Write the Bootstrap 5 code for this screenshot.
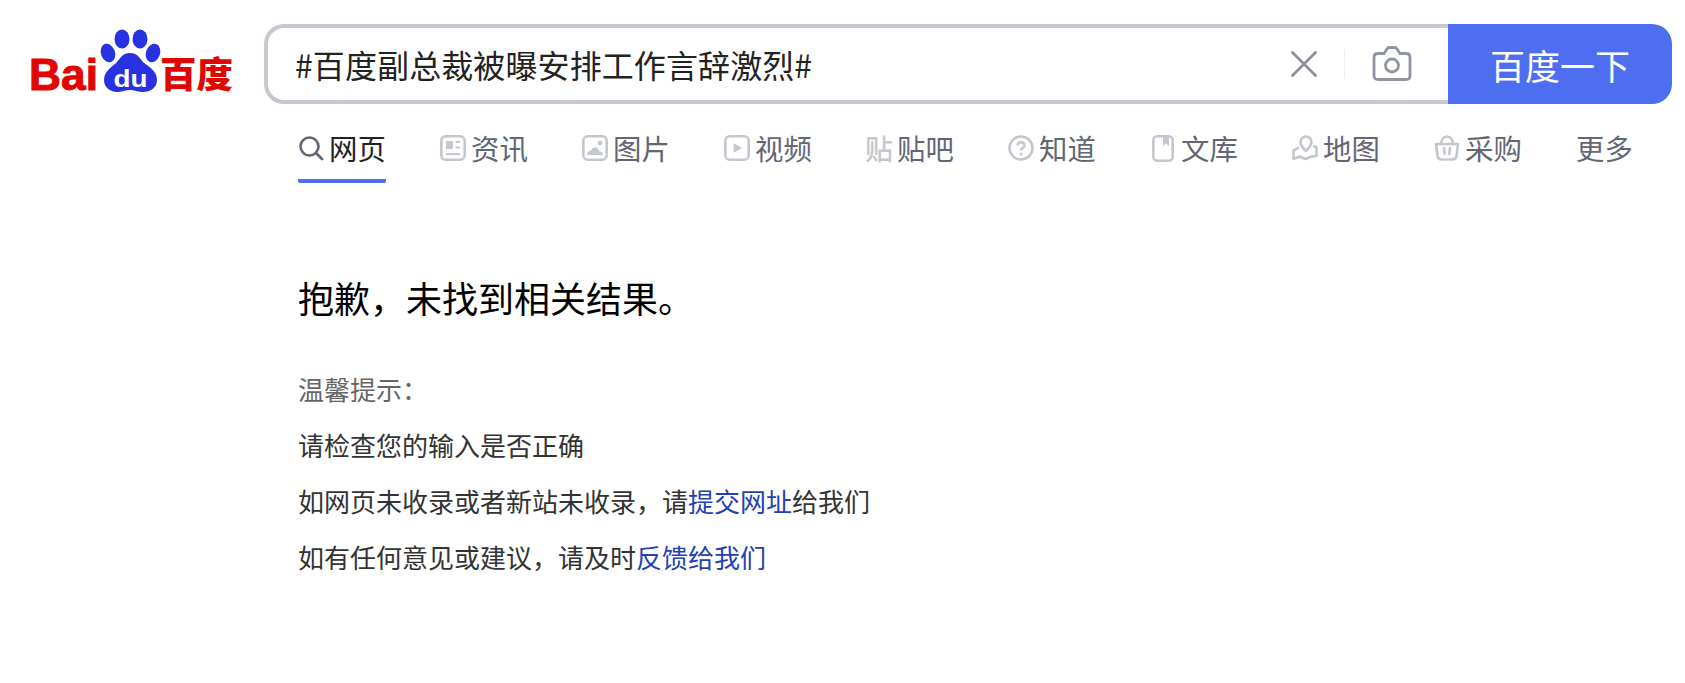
<!DOCTYPE html>
<html lang="zh-CN">
<head>
<meta charset="utf-8">
<title>百度</title>
<link href="https://cdn.jsdelivr.net/npm/bootstrap@5.3.0/dist/css/bootstrap.min.css" rel="stylesheet">
<style>
body{font-family:"Noto Sans CJK SC","Liberation Sans",sans-serif;background:#fff;color:#333;}
.top-row{padding-top:24px;height:104px;}
.logo-cell{width:264px;flex:none;}
.logo-svg{display:block;margin:-2px 0 0 0;}
.logo-txt{font-family:"Liberation Sans",sans-serif;font-weight:700;}
.logo-cjk{font-family:"Noto Sans CJK SC",sans-serif;font-weight:900;}
.search-box{width:1184px;height:80px;border:4px solid #c4c7ce;border-right:0;border-radius:20px 0 0 20px;padding-left:27px;flex:none;}
.search-text{font-size:32px;letter-spacing:.1px;line-height:1;color:#222;}
.act-x{margin-right:27px;}
.act-sep{width:1px;height:28px;background:#f0f0f3;margin-right:27px;}
.act-cam{margin-right:36px;}
.go-btn{width:224px;height:80px;background:#4e6ef2;border:0;border-radius:0 20px 20px 0;color:#fff;font-size:35px;line-height:1;padding:0;flex:none;}
.go-btn:hover{background:#4e6ef2;color:#fff;}
.tab-row{margin-left:298px;padding-top:24px;gap:54px;}
.tab-item{width:88px;height:55px;border-bottom:4px solid transparent;font-size:28.4px;line-height:40px;color:#626675;text-decoration:none;white-space:nowrap;flex:none;}
.tab-item:hover{color:#626675;}
.tab-on{border-bottom-color:#4e6ef2;border-radius:0 0 2px 2px;color:#222;}
.tab-on:hover{color:#222;}
.tab-ic{width:26px;height:40px;margin-right:5px;flex:none;display:flex;align-items:center;justify-content:center;}
.tie-glyph{font-size:28px;font-weight:500;color:#c4c7ce;line-height:40px;}
.result-wrap{margin:86px 0 0 298px;}
.sorry{font-size:36px;line-height:56px;color:#000;margin:0 0 36px;font-weight:400;}
.tip-line{font-size:26px;line-height:56px;color:#333;margin:0;}
.tip-head{color:#666;}
.tip-link{color:#2440b3;text-decoration:none;}
.tip-link:hover{color:#2440b3;}
</style>
</head>
<body>
<header class="top-row d-flex">
  <div class="logo-cell">
    <svg class="logo-svg" width="264" height="80" viewBox="0 24 264 80" role="img" aria-label="Baidu 百度">
      <text class="logo-txt" x="29" y="92" font-size="45" fill="#e10601" stroke="#e10601" stroke-width="1" textLength="69" lengthAdjust="spacingAndGlyphs">Bai</text>
      <g fill="#2932e1">
        <ellipse cx="122" cy="41" rx="7.500" ry="9.500"/>
        <ellipse cx="140" cy="41" rx="7.500" ry="9.500"/>
        <ellipse cx="108" cy="55" rx="7" ry="9.500" transform="rotate(-20 108 55)"/>
        <ellipse cx="153" cy="55" rx="7" ry="9.500" transform="rotate(20 153 55)"/>
        <path d="M130 55c-7 0-10 5-13 9-3 4-13 8-13 18 0 8 7 12 13 12 5 0 9-2 13-2s8 2 13 2c7 0 14-4 14-12 0-10-10-14-14-18-3-4-6-9-13-9z"/>
      </g>
      <text class="logo-txt" x="130.500" y="89" font-size="24" fill="#fff" text-anchor="middle" textLength="34" lengthAdjust="spacingAndGlyphs">du</text>
      <text class="logo-cjk" x="160" y="90" font-size="36" fill="#e10601" textLength="73" lengthAdjust="spacingAndGlyphs">百度</text>
    </svg>
  </div>
  <div class="search-box d-flex align-items-center">
    <div class="search-text flex-grow-1">#百度副总裁被曝安排工作言辞激烈#</div>
    <svg class="act-x" width="26" height="26" viewBox="0 0 26 26" aria-hidden="true"><path d="M1.500 1.500L24.500 24.500M24.500 1.500L1.500 24.500" stroke="#8d919f" stroke-width="2.800" stroke-linecap="round" fill="none"/></svg>
    <span class="act-sep"></span>
    <svg class="act-cam" width="40" height="36" viewBox="0 0 40 36" aria-hidden="true"><path d="M6 7.500h6l3-4.500c.5-.8 1-1.500 2-1.500h6c1 0 1.500.7 2 1.500l3 4.500h6c2.500 0 4 1.500 4 4v18c0 2.500-1.500 4-4 4H6c-2.500 0-4-1.500-4-4v-18c0-2.500 1.500-4 4-4z" stroke="#9195a3" stroke-width="2.800" fill="none"/><circle cx="20" cy="19.500" r="6.500" stroke="#9195a3" stroke-width="2.800" fill="none"/></svg>
  </div>
  <button type="button" class="btn go-btn">百度一下</button>
</header>

<nav class="tab-row d-flex">
  <a class="tab-item tab-on d-flex" href="#"><span class="tab-ic"><svg width="26" height="26" viewBox="0 0 26 26" aria-hidden="true"><circle cx="11.500" cy="11.500" r="9" stroke="#626675" stroke-width="2.600" fill="none"/><path d="M18 18l6 6" stroke="#626675" stroke-width="2.800" stroke-linecap="round"/></svg></span>网页</a>
  <a class="tab-item d-flex" href="#"><span class="tab-ic"><svg width="26" height="26" viewBox="0 0 26 26" aria-hidden="true"><rect x="1.300" y="1.300" width="23.400" height="23.400" rx="4.500" stroke="#c4c7ce" stroke-width="2.600" fill="none"/><rect x="6" y="6" width="7" height="8" fill="#c4c7ce"/><path d="M15.500 7h4.500M15.500 12.500h4.500M6 19h14" stroke="#c4c7ce" stroke-width="2.200"/></svg></span>资讯</a>
  <a class="tab-item d-flex" href="#"><span class="tab-ic"><svg width="26" height="26" viewBox="0 0 26 26" aria-hidden="true"><rect x="1.300" y="1.300" width="23.400" height="23.400" rx="4.500" stroke="#c4c7ce" stroke-width="2.600" fill="none"/><circle cx="18" cy="8" r="2.300" fill="#c4c7ce"/><path d="M5 20c0-3 2-4.500 4-4.500.8-2 2.500-3 4-3 2.500 0 4 2 4.500 4 2 0 3.500 1.500 3.500 3.500z" fill="#c4c7ce"/></svg></span>图片</a>
  <a class="tab-item d-flex" href="#"><span class="tab-ic"><svg width="26" height="26" viewBox="0 0 26 26" aria-hidden="true"><rect x="1.300" y="1.300" width="23.400" height="23.400" rx="4.500" stroke="#c4c7ce" stroke-width="2.600" fill="none"/><path d="M9.500 8l8.500 5-8.500 5z" fill="#c4c7ce"/></svg></span>视频</a>
  <a class="tab-item d-flex" href="#"><span class="tab-ic tie-glyph">贴</span>贴吧</a>
  <a class="tab-item d-flex" href="#"><span class="tab-ic"><svg width="26" height="26" viewBox="0 0 26 26" aria-hidden="true"><circle cx="13" cy="13" r="11.500" stroke="#c4c7ce" stroke-width="2.600" fill="none"/><path d="M9.500 10.500c0-2 1.500-3.300 3.500-3.300s3.500 1.300 3.500 3c0 2.800-3.500 2.700-3.500 5.300" stroke="#c4c7ce" stroke-width="2.600" fill="none"/><circle cx="13" cy="19" r="1.500" fill="#c4c7ce"/></svg></span>知道</a>
  <a class="tab-item d-flex" href="#"><span class="tab-ic"><svg width="22" height="27" viewBox="0 0 22 27" aria-hidden="true"><rect x="1.300" y="1.300" width="19.400" height="24.400" rx="4" stroke="#c4c7ce" stroke-width="2.600" fill="none"/><path d="M11 2h6v9l-3-2.500L11 11z" fill="#c4c7ce"/></svg></span>文库</a>
  <a class="tab-item d-flex" href="#"><span class="tab-ic"><svg width="26" height="26" viewBox="0 0 26 26" aria-hidden="true"><path d="M7 12.500L1.500 15.500v8.500l6-2.500 6 2.500 6-2.500 5-.5v-9l-3.500-1" stroke="#c4c7ce" stroke-width="2.600" fill="none" stroke-linejoin="round"/><path d="M14 16c-3.500-3.500-5.500-5.500-5.500-9a5.500 5.500 0 0 1 11 0c0 3.500-2.500 5.500-5.500 9z" stroke="#c4c7ce" stroke-width="2.600" fill="none" stroke-linejoin="round"/></svg></span>地图</a>
  <a class="tab-item d-flex" href="#"><span class="tab-ic"><svg width="26" height="26" viewBox="0 0 26 26" aria-hidden="true"><path d="M2 9h22l-1.500 12c-.3 2-1.500 3.500-4 3.500h-11c-2.500 0-3.700-1.500-4-3.500z" stroke="#c4c7ce" stroke-width="2.600" fill="none" stroke-linejoin="round"/><path d="M7 9c0-4 2.500-7.500 6-7.500S19 5 19 9M10 13l.7 6M16 13l-.7 6" stroke="#c4c7ce" stroke-width="2.600" fill="none" stroke-linecap="round"/></svg></span>采购</a>
  <a class="tab-item d-flex" href="#">更多</a>
</nav>

<main class="result-wrap">
  <h1 class="sorry">抱歉，未找到相关结果。</h1>
  <p class="tip-line tip-head">温馨提示：</p>
  <p class="tip-line">请检查您的输入是否正确</p>
  <p class="tip-line">如网页未收录或者新站未收录，请<a class="tip-link" href="#">提交网址</a>给我们</p>
  <p class="tip-line">如有任何意见或建议，请及时<a class="tip-link" href="#">反馈给我们</a></p>
</main>
<script src="https://cdn.jsdelivr.net/npm/bootstrap@5.3.0/dist/js/bootstrap.bundle.min.js"></script>
</body>
</html>
